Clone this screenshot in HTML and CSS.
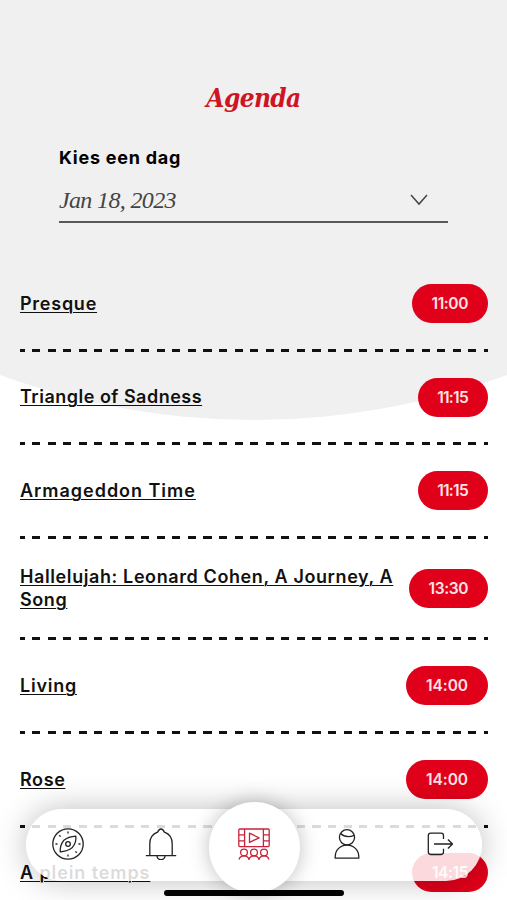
FILE: index.html
```html
<!DOCTYPE html>
<html lang="nl">
<head>
    <meta charset="UTF-8">
    <meta name="viewport" content="width=device-width, initial-scale=1.0">
    <title>Agenda</title>
    <link rel="stylesheet" href="styles.css">
</head>
<body>
    <div class="screen">
        <div class="backdrop"></div>
        <header class="header">
            <h1 class="title">Agenda</h1>
            <label class="day-label">Kies een dag</label>
            <div class="day-select">
                <span class="day-value">Jan 18, 2023</span>
                <svg class="chevron" viewBox="0 0 18 12"><path d="M1 1l8 9 8-9"/></svg>
            </div>
        </header>
        <ul class="agenda">
            <li class="film"><a class="film-name presque">Presque</a><span class="time">11:00</span></li>
            <li class="film"><a class="film-name triangle">Triangle of Sadness</a><span class="time narrow">11:15</span></li>
            <li class="film"><a class="film-name armageddon">Armageddon Time</a><span class="time narrow">11:15</span></li>
            <li class="film"><a class="film-name hallelujah">Hallelujah: Leonard Cohen, A Journey, A<br>Song</a><span class="time">13:30</span></li>
            <li class="film"><a class="film-name living">Living</a><span class="time wide">14:00</span></li>
            <li class="film"><a class="film-name rose">Rose</a><span class="time wide">14:00</span></li>
            <li class="film"><a class="film-name temps">A plein temps</a><span class="time">14:15</span></li>
        </ul>
        <nav class="tabbar">
            <a class="tab">
                <svg class="icon" viewBox="0 0 32 32">
                    <circle cx="16" cy="16" r="15.2"/>
                    <path d="M23.800 8.200c.6 4.600-.6 8-3.400 11.200-3.200 2.600-7 4-12.200 4.400-.2-4.600 1-8.200 3.400-11.200 3.200-2.800 7.400-4.200 12.200-4.400z"/>
                    <circle cx="16" cy="16" r="2.300"/>
                    <path d="M16 3.500v2M16 26.500v2M3.500 16h2M26.500 16h2M7.200 7.200l1.400 1.400M23.400 23.400l1.400 1.400"/>
                </svg>
            </a>
            <a class="tab">
                <svg class="icon" viewBox="0 0 32 32">
                    <path d="M.8 27.700h30.400M4.800 27.500V16C4.800 9.500 8 5.800 12.600 4.200c.8-2 1.800-3.200 3.400-3.200s2.600 1.200 3.400 3.200c4.600 1.600 7.800 5.300 7.800 11.800v11.500M12 28c.4 4.700 7.600 4.700 8 0"/>
                </svg>
            </a>
            <a class="tab tab-active">
                <svg class="icon" viewBox="0 0 32 32">
                    <rect x=".8" y="1" width="30.400" height="17.600" rx="1"/>
                    <path d="M6.600 1v17.600M25.400 1v17.600M1 6.800h5.600M1 12.800h5.600M25.400 6.800H31M25.400 12.800H31M11.500 5.200v9.200l9.600-4.600z"/>
                    <circle cx="6" cy="24.500" r="3.400"/>
                    <circle cx="16" cy="24.500" r="3.400"/>
                    <circle cx="26" cy="24.500" r="3.400"/>
                    <path d="M1 31.500c.7-2.300 2-3.600 5-3.600s4.300 1.300 5 3.600c.7-2.300 2-3.600 5-3.600s4.300 1.300 5 3.600c.7-2.300 2-3.600 5-3.600s4.300 1.300 5 3.600"/>
                </svg>
            </a>
            <a class="tab">
                <svg class="icon" viewBox="0 0 32 32">
                    <circle cx="16" cy="9.300" r="7.600"/>
                    <path d="M9.500 5.500c3 2.800 8.500 3.800 13.800 1.800M4.200 30.200v-1.500c0-6.800 5.200-11.600 11.800-11.600s11.800 4.800 11.800 11.600v1.500z"/>
                </svg>
            </a>
            <a class="tab">
                <svg class="icon" viewBox="0 0 32 32">
                    <path d="M19.500 11V7.500c0-1.500-.9-2.400-2.400-2.400H6.700c-1.500 0-2.400.9-2.400 2.400v16.600c0 1.500.9 2.400 2.400 2.400h10.400c1.500 0 2.400-.9 2.400-2.400v-3.300M10 16h18.300M23.900 11.500l4.600 4.500-4.600 4.500"/>
                </svg>
            </a>
        </nav>
        <div class="home-indicator"></div>
    </div>
</body>
</html>
```
FILE: styles.css
```css
* {
    box-sizing: border-box;
}
body {
    margin: 0;
    font-family: Inter, "Liberation Sans", sans-serif;
    color: #111;
    background: #fff;
    overflow: hidden;
}
.screen {
    position: relative;
    height: 900px;
    overflow: hidden;
}
.backdrop {
    position: absolute;
    top: 0;
    left: 0;
    right: 0;
    height: 421px;
    background: #f0f0f0;
    clip-path: circle(736px at 50% -316px);
}
.header {
    position: relative;
    height: 258.2px;
    padding: 79px 59px 0;
}
.title {
    margin: 0;
    font: italic bold 26px/38px "DejaVu Serif Condensed", "DejaVu Serif", serif;
    letter-spacing: -0.6px;
    text-align: center;
    color: #cf1424;
}
.day-label {
    display: block;
    margin-top: 30px;
    font-size: 18px;
    font-weight: 700;
    line-height: 22px;
    letter-spacing: 0.75px;
    color: #000;
}
.day-select {
    display: flex;
    align-items: center;
    justify-content: space-between;
    height: 53.6px;
    padding: 11px 20px 0 0;
    border-bottom: 2px solid #58595b;
}
.day-value {
    font: italic 24px/30px "Liberation Serif", serif;
    letter-spacing: -0.65px;
    color: #444;
}
.chevron {
    width: 18px;
    height: 12px;
    fill: none;
    stroke: #444;
    stroke-width: 1.5;
}
.agenda {
    position: relative;
    margin: 0;
    padding: 0 19.5px 0 20px;
    list-style: none;
}
.film {
    display: flex;
    align-items: center;
    justify-content: space-between;
    padding: 25.8px 0 28.8px;
    background: repeating-linear-gradient(90deg, #111 0 4.6px, transparent 4.6px 12px, #111 12px 15.58px) left bottom / 100% 3px no-repeat;
}
.film-name {
    font-size: 18px;
    font-weight: 600;
    line-height: 23.4px;
    white-space: nowrap;
    text-decoration: underline;
    text-decoration-thickness: 1.3px;
    text-underline-offset: 2px;
}
.presque, .living {
    letter-spacing: 0.75px;
}
.triangle {
    letter-spacing: 0.5px;
}
.armageddon {
    letter-spacing: 0.97px;
}
.hallelujah, .rose {
    letter-spacing: 0.6px;
}
.temps {
    letter-spacing: 0.9px;
}
.time {
    flex: none;
    height: 39px;
    padding: 0 19.5px;
    border-radius: 20px;
    background: #e1001a;
    color: #ffe3e5;
    font-size: 15.5px;
    font-weight: 600;
    line-height: 39px;
    letter-spacing: -0.4px;
}
.time.narrow {
    letter-spacing: -0.7px;
}
.time.wide {
    letter-spacing: -0.05px;
}
.tabbar {
    position: absolute;
    left: 26px;
    right: 25px;
    top: 809px;
    height: 72px;
    display: flex;
    align-items: center;
    justify-content: space-between;
    padding: 0 26px;
    border-radius: 36px;
    background: rgba(255, 255, 255, 0.85);
    box-shadow: 0 0 32px rgba(0, 0, 0, 0.26);
}
.tab {
    display: flex;
    align-items: center;
    justify-content: center;
    width: 32px;
    height: 72px;
    padding-bottom: 2px;
}
.tab-active {
    width: 91px;
    height: 91px;
    margin: 0 -29.5px;
    border-radius: 50%;
    background: #fff;
    box-shadow: 0 0 20px rgba(0, 0, 0, 0.25);
    translate: 0 2px;
}
.icon {
    flex: none;
    width: 32px;
    height: 32px;
    fill: none;
    stroke: #222;
    stroke-width: 1.3;
    stroke-linejoin: round;
}
.tab-active .icon {
    margin-top: -5px;
    stroke: #c8233a;
}
.home-indicator {
    position: absolute;
    left: 164px;
    top: 890px;
    width: 180px;
    height: 6px;
    border-radius: 3px;
    background: #000;
}
```
